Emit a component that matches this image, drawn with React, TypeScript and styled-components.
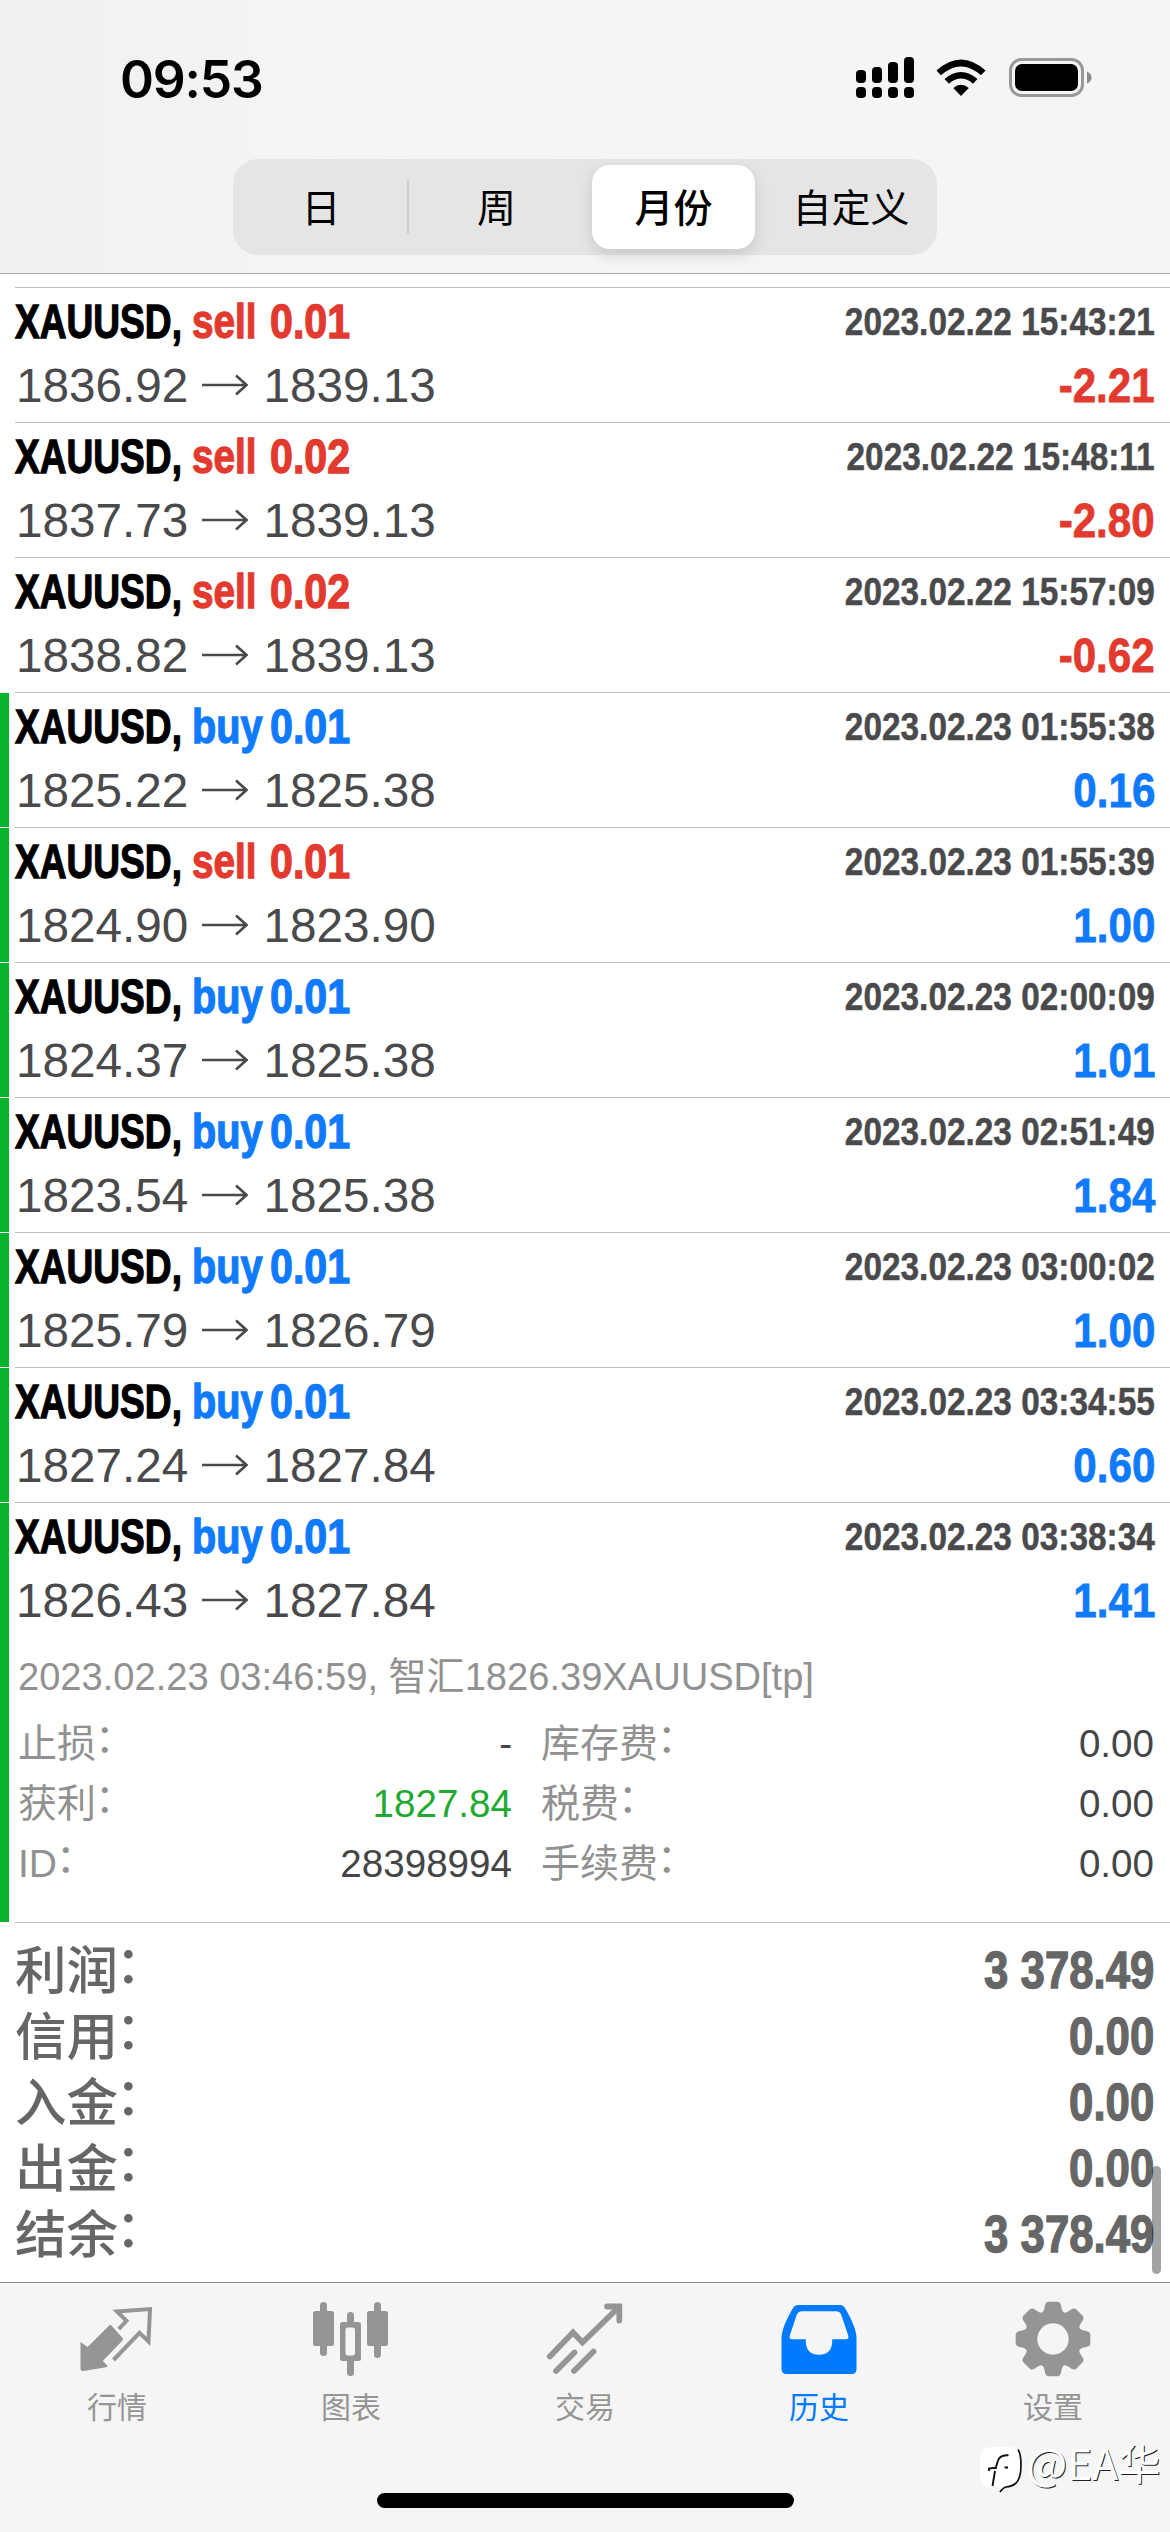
import React from "react";
import styled, { createGlobalStyle } from "styled-components";

const sans = `"Liberation Sans", "Noto Sans CJK SC", sans-serif`;
const RED = "#e23a2e";
const BLUE = "#0f7afc";
const GREEN = "#08b42c";

const GlobalStyle = createGlobalStyle`
  * { box-sizing: border-box; }
  body { margin: 0; background: #fff; }
`;

const Screen = styled.div`
  position: relative;
  display: flex;
  flex-direction: column;
  width: 1170px;
  height: 2532px;
  overflow: hidden;
  background: #fff;
  font-family: ${sans};
`;

const Header = styled.header`
  display: flex;
  flex-direction: column;
  height: 274px;
  flex: none;
  background: linear-gradient(90deg, #f0f0f0 0%, #f4f4f5 22%, #f5f5f5 50%, #f5f5f5 80%, #f3f4f6 100%);
  border-bottom: 1px solid #a9a9a9;
`;

const StatusBar = styled.div`
  display: flex;
  justify-content: space-between;
  align-items: center;
  height: 159px;
  padding: 0 78px 4px 120px;
`;

const Clock = styled.div`
  padding-top: 2px;
  font-family: Inter, sans-serif;
  font-size: 51.5px;
  font-weight: 600;
  line-height: 60px;
  letter-spacing: -1.2px;
  color: #000;
`;

const StatusIcons = styled.div`
  display: flex;
  align-items: center;
  gap: 22px;
`;

const Segmented = styled.div`
  display: grid;
  grid-template-columns: 176px 183px 163px 1fr;
  width: 704px;
  height: 96px;
  margin-left: 233px;
  padding: 6px 0;
  border-radius: 25px;
  background: #e5e5e6;
`;

const Segment = styled.div<{ $active?: boolean; $divider?: boolean; $pad?: string }>`
  position: relative;
  display: flex;
  align-items: center;
  justify-content: center;
  padding: ${(p) => p.$pad || "0 0 5px"};
  border-radius: 18px;
  color: #000;
  font-size: 39px;
  line-height: 60px;
  font-family: "Noto Sans CJK SC", sans-serif;
  font-weight: ${(p) => (p.$active ? 500 : 400)};
  background: ${(p) => (p.$active ? "#fff" : "transparent")};
  box-shadow: ${(p) => (p.$active ? "0 6px 16px rgba(0,0,0,0.13)" : "none")};
  &::after {
    content: "";
    display: ${(p) => (p.$divider ? "block" : "none")};
    position: absolute;
    right: 0;
    top: 15px;
    width: 2px;
    height: 54px;
    background: #cdcdcf;
  }
`;

const List = styled.main`
  display: flex;
  flex-direction: column;
  flex: none;
  height: 1648px;
  padding-top: 13px;
`;

const Deal = styled.article<{ $tp: boolean }>`
  position: relative;
  flex: none;
  padding-left: 15px;
  &::before {
    content: "";
    display: ${(p) => (p.$tp ? "block" : "none")};
    position: absolute;
    left: 0;
    top: 1px;
    bottom: 0;
    width: 9px;
    background: ${GREEN};
  }
`;

const DealBody = styled.div`
  height: 135px;
  padding: 5px 15px 0 0;
  border-top: 1px solid #bebebe;
`;

const Line = styled.div<{ $h: number }>`
  display: flex;
  justify-content: space-between;
  height: ${(p) => p.$h}px;
  line-height: ${(p) => p.$h}px;
`;

const Title = styled.div`
  display: flex;
  font-size: 49px;
  font-weight: 700;
`;

const Condensed = styled.span<{ $scale: number; $width?: number; $right?: boolean; $color?: string }>`
  display: block;
  width: ${(p) => (p.$width ? `${p.$width}px` : "auto")};
  white-space: nowrap;
  color: ${(p) => p.$color || "#000"};
  transform: scaleX(${(p) => p.$scale});
  transform-origin: ${(p) => (p.$right ? "right" : "left")} center;
  -webkit-text-stroke: 1.3px currentColor;
`;

const When = styled(Condensed)`
  font-size: 39.5px;
  font-weight: 700;
  -webkit-text-stroke-width: 0.5px;
`;

const Profit = styled(Condensed)`
  font-size: 49px;
  font-weight: 700;
  -webkit-text-stroke-width: 0.8px;
`;

const Prices = styled.div`
  display: flex;
  align-items: center;
  padding-left: 1px;
  font-size: 47.7px;
  color: #4a4a4c;
`;

const Arrow = styled.svg`
  width: 46px;
  height: 24px;
  margin: 0 15px 2px 14px;
`;

const Details = styled.div`
  height: 285px;
  padding: 10px 16px 0 3px;
  color: #919191;
  font-size: 38.1px;
`;

const Comment = styled.p`
  margin: 0;
  height: 67px;
  line-height: 60px;
  white-space: nowrap;
`;

const DetailGrid = styled.div`
  display: grid;
  grid-template-columns: 494px 1fr;
  column-gap: 29px;
`;

const DetailCell = styled.div`
  display: flex;
  justify-content: space-between;
  height: 60px;
  line-height: 60px;
`;

const DetailLabel = styled.span`
  font-size: 39px;
`;

const Colon = styled.span<{ $raise: number; $pull: number }>`
  margin-left: -${(p) => p.$pull}px;
  line-height: 0;
  vertical-align: ${(p) => p.$raise}px;
`;

const DetailValue = styled.span<{ $green?: boolean }>`
  font-size: 38.6px;
  color: ${(p) => (p.$green ? "#1eaa32" : "#454547")};
`;

const Summary = styled.section`
  flex: none;
  height: 360px;
  margin-left: 15px;
  padding: 14px 16px 0 0;
  border-top: 1px solid #bebebe;
`;

const SummaryRow = styled.div`
  display: flex;
  justify-content: space-between;
  height: 66px;
  line-height: 66px;
  color: #666;
`;

const SummaryLabel = styled.span`
  padding-top: 1px;
  font-size: 51.5px;
  font-weight: 500;
`;

const SummaryValue = styled(Condensed)`
  font-size: 51.5px;
  font-weight: 700;
`;

const ScrollThumb = styled.div`
  position: absolute;
  left: 1152px;
  top: 2166px;
  width: 9px;
  height: 108px;
  border-radius: 5px;
  background: rgba(0, 0, 0, 0.36);
`;

const TabBar = styled.nav`
  display: flex;
  flex-direction: column;
  align-items: center;
  flex: 1;
  background: #f5f5f5;
  border-top: 1px solid #868686;
`;

const Tabs = styled.div`
  display: grid;
  grid-template-columns: repeat(5, 234px);
  height: 210px;
`;

const Tab = styled.div<{ $active?: boolean }>`
  display: flex;
  flex-direction: column;
  align-items: center;
  padding-top: 14px;
  color: ${(p) => (p.$active ? "#007aff" : "#959595")};
`;

const TabIcon = styled.svg`
  width: 84px;
  height: 84px;
`;

const TabLabel = styled.span`
  margin-top: 2px;
  font-family: "Noto Sans CJK SC", sans-serif;
  font-size: 30px;
  line-height: 44px;
`;

const HomeIndicator = styled.div`
  width: 417px;
  height: 15px;
  border-radius: 8px;
  background: #000;
`;

const Watermark = styled.div`
  position: absolute;
  left: 978px;
  top: 2440px;
  display: flex;
  align-items: flex-start;
  color: #fff;
`;

const WatermarkText = styled.span`
  margin: -6px 0 0 3px;
  font-family: "Noto Sans CJK SC", sans-serif;
  font-size: 42.5px;
  line-height: 56px;
  white-space: nowrap;
  text-shadow: 1px 1px 0 #222;
`;

type DealData = { side: "buy" | "sell"; lots: string; open: string; close: string; time: string; profit: string; tp: boolean };

const deals: DealData[] = [
  { side: "sell", lots: "0.01", open: "1836.92", close: "1839.13", time: "2023.02.22 15:43:21", profit: "-2.21", tp: false },
  { side: "sell", lots: "0.02", open: "1837.73", close: "1839.13", time: "2023.02.22 15:48:11", profit: "-2.80", tp: false },
  { side: "sell", lots: "0.02", open: "1838.82", close: "1839.13", time: "2023.02.22 15:57:09", profit: "-0.62", tp: false },
  { side: "buy", lots: "0.01", open: "1825.22", close: "1825.38", time: "2023.02.23 01:55:38", profit: "0.16", tp: true },
  { side: "sell", lots: "0.01", open: "1824.90", close: "1823.90", time: "2023.02.23 01:55:39", profit: "1.00", tp: true },
  { side: "buy", lots: "0.01", open: "1824.37", close: "1825.38", time: "2023.02.23 02:00:09", profit: "1.01", tp: true },
  { side: "buy", lots: "0.01", open: "1823.54", close: "1825.38", time: "2023.02.23 02:51:49", profit: "1.84", tp: true },
  { side: "buy", lots: "0.01", open: "1825.79", close: "1826.79", time: "2023.02.23 03:00:02", profit: "1.00", tp: true },
  { side: "buy", lots: "0.01", open: "1827.24", close: "1827.84", time: "2023.02.23 03:34:55", profit: "0.60", tp: true },
  { side: "buy", lots: "0.01", open: "1826.43", close: "1827.84", time: "2023.02.23 03:38:34", profit: "1.41", tp: true },
];

const details = [
  { label: "止损", value: "-" },
  { label: "库存费", value: "0.00" },
  { label: "获利", value: "1827.84", green: true },
  { label: "税费", value: "0.00" },
  { label: "ID", value: "28398994" },
  { label: "手续费", value: "0.00" },
];

const totals = [
  ["利润", "3 378.49"],
  ["信用", "0.00"],
  ["入金", "0.00"],
  ["出金", "0.00"],
  ["结余", "3 378.49"],
];

const gearPath = (() => {
  const pts: string[] = [];
  const at = (r: number, deg: number) => {
    const a = (deg * Math.PI) / 180;
    return `${(42 + r * Math.cos(a)).toFixed(2)} ${(42 + r * Math.sin(a)).toFixed(2)}`;
  };
  for (let i = 0; i < 8; i++) {
    const c = i * 45 - 90;
    pts.push(
      `${i ? "L" : "M"}${at(30.5, c - 17)}`,
      `L${at(35, c - 13)}`,
      `Q${at(37.8, c - 11)} ${at(37.6, c - 7)}`,
      `L${at(37.6, c + 7)}`,
      `Q${at(37.8, c + 11)} ${at(35, c + 13)}`,
      `L${at(30.5, c + 17)}`,
      `Q${at(27, c + 22.5)} ${at(30.5, c + 28)}`,
    );
  }
  return pts.join(" ") + "Z M26.3 42a15.7 15.7 0 1 0 31.4 0a15.7 15.7 0 1 0-31.4 0Z";
})();

const icons: Record<string, React.ReactNode> = {
  quotes: (
    <>
      <path fill="currentColor" d="M5.5 45 12.6 50 34.4 28.2Q35.5 27.5 36.5 28.5L47.5 41Q48.3 42.3 47.5 43.5L27.8 64 32.3 68.5Q32.8 69.8 31.3 70.2L8 74Q5.5 74 5.5 71.5Z" />
      <path fill="none" stroke="currentColor" strokeWidth="4" d="M43.8 32 51.5 23.8 42 14.5 75 12.1 73.5 44.5 64.5 35.8 38.5 63" />
    </>
  ),
  chart: (
    <g fill="currentColor">
      <rect x="4" y="14" width="21" height="35" rx="2.5" />
      <rect x="11" y="5" width="7" height="54" rx="3.5" />
      <path fillRule="evenodd" d="M33.5 25h16a2.5 2.5 0 0 1 2.5 2.5v34a2.5 2.5 0 0 1-2.5 2.5h-16a2.5 2.5 0 0 1-2.5-2.5v-34a2.5 2.5 0 0 1 2.5-2.5ZM39 30.5a2.5 2.5 0 0 0-2.5 2.5v23a2.5 2.5 0 0 0 2.5 2.5h4.500a2.5 2.5 0 0 0 2.5-2.5v-23a2.5 2.5 0 0 0-2.5-2.5Z" />
      <path d="M38 26V18.500a3.5 3.5 0 0 1 7 0V26ZM38 63V75.500a3.5 3.5 0 0 0 7 0V63Z" />
      <rect x="58" y="14" width="21" height="35" rx="2.5" />
      <rect x="65" y="5" width="7" height="56" rx="3.5" />
    </g>
  ),
  trade: (
    <g fill="none" stroke="currentColor" strokeWidth="5.8" strokeLinecap="round" strokeLinejoin="miter">
      <path d="M6.8 59.5 30 35.5 39.5 45.5 76 10" />
      <path d="M64 9.5H76.3V23.5" />
      <path d="M13 74 31.5 55.5M31 74 50.5 54.5" />
    </g>
  ),
  history: (
    <path fill="currentColor" fillRule="evenodd" d="M21 8H63Q66.5 8 68.3 11.5Q79.5 31 79.5 41V72Q79.5 77 74.5 77H9.500Q4.5 77 4.5 72V41Q4.500 31 15.7 11.5Q17.5 8 21 8ZM24.5 14.200Q21.5 14.2 20 17L12.8 38.500Q11.8 42.2 15 42.2H28.800V45Q29.500 57.7 42 57.7Q54.500 57.7 55.2 45V42.2H69Q72.2 42.2 71.2 38.5L64 17Q62.5 14.2 59.5 14.2Z" />
  ),
  settings: <path fill="currentColor" fillRule="evenodd" d={gearPath} />,
};

const tabs = [
  { icon: "quotes", label: "行情" },
  { icon: "chart", label: "图表" },
  { icon: "trade", label: "交易" },
  { icon: "history", label: "历史", active: true },
  { icon: "settings", label: "设置" },
];

function DealRow({ deal, children }: { deal: DealData; children?: React.ReactNode }) {
  const sideColor = deal.side === "sell" ? RED : BLUE;
  return (
    <Deal $tp={deal.tp}>
      <DealBody>
        <Line $h={57}>
          <Title>
            <Condensed $scale={0.757} $width={177}>XAUUSD,</Condensed>
            <Condensed $scale={deal.side === "sell" ? 0.79 : 0.81} $width={78} $color={sideColor}>{deal.side}</Condensed>
            <Condensed $scale={0.84} $width={90} $color={sideColor}>{deal.lots}</Condensed>
          </Title>
          <When $scale={0.845} $right $color="#4a4a4c">{deal.time}</When>
        </Line>
        <Line $h={71}>
          <Prices>
            <span>{deal.open}</span>
            <Arrow viewBox="0 0 46 24">
              <path d="M0 12H44M34 2.5 44.5 12 34 21.5" fill="none" stroke="currentColor" strokeWidth="2.6" />
            </Arrow>
            <span>{deal.close}</span>
          </Prices>
          <Profit $scale={0.86} $right $color={deal.profit[0] === "-" ? RED : BLUE}>{deal.profit}</Profit>
        </Line>
      </DealBody>
      {children}
    </Deal>
  );
}

export default function App() {
  return (
    <Screen>
      <GlobalStyle />
      <Header>
        <StatusBar>
          <Clock>09:53</Clock>
          <StatusIcons>
            <svg width="58" height="42" viewBox="0 0 58 42">
              {[14, 11, 6, 1].map((top, i) => (
                <g key={top}>
                  <rect x={i * 16} y={top - 1} width="10" height={27 - top} rx="4" />
                  <rect x={i * 16} y="30" width="10" height="11" rx="4" />
                </g>
              ))}
            </svg>
            <svg width="50" height="38" viewBox="0 0 50 38">
              <path d="M0.5 11.5Q25-10.500 49.5 11.5L45 16.3Q25-1.500 5 16.3Z" />
              <path d="M8.5 20Q25 6 41.5 20L37 24.7Q25 14.5 13 24.7Z" />
              <path d="M17.2 29Q25 22.5 32.8 29L25 37Z" />
            </svg>
            <svg width="84" height="40" viewBox="0 0 84 40">
              <rect x="2.500" y="1.500" width="72" height="36" rx="11" fill="none" stroke="#98989a" strokeWidth="3" />
              <rect x="7" y="6" width="63" height="27" rx="7" />
              <path d="M79 13.5Q83.5 15.5 83.5 19.5T79 25.5Z" fill="#8a8a8c" />
            </svg>
          </StatusIcons>
        </StatusBar>
        <Segmented>
          <Segment $divider>日</Segment>
          <Segment $pad="0 8px 5px 0">周</Segment>
          <Segment $active>月份</Segment>
          <Segment $pad="0 0 5px 10px">自定义</Segment>
        </Segmented>
      </Header>
      <List>
        {deals.map((deal, i) => (
          <DealRow key={deal.time} deal={deal}>
            {i === deals.length - 1 && (
              <Details>
                <Comment>2023.02.23 03:46:59, 智汇1826.39XAUUSD[tp]</Comment>
                <DetailGrid>
                  {details.map((d) => (
                    <DetailCell key={d.label}>
                      <DetailLabel>
                        {d.label}
                        <Colon $raise={5} $pull={1}>：</Colon>
                      </DetailLabel>
                      <DetailValue $green={d.green}>{d.value}</DetailValue>
                    </DetailCell>
                  ))}
                </DetailGrid>
              </Details>
            )}
          </DealRow>
        ))}
      </List>
      <Summary>
        {totals.map(([label, value]) => (
          <SummaryRow key={label}>
            <SummaryLabel>
              {label}
              <Colon $raise={6} $pull={2.5}>：</Colon>
            </SummaryLabel>
            <SummaryValue $scale={0.85} $right $color="#666">{value}</SummaryValue>
          </SummaryRow>
        ))}
      </Summary>
      <TabBar>
        <Tabs>
          {tabs.map((t) => (
            <Tab key={t.label} $active={t.active}>
              <TabIcon viewBox="0 0 84 84">{icons[t.icon]}</TabIcon>
              <TabLabel>{t.label}</TabLabel>
            </Tab>
          ))}
        </Tabs>
        <HomeIndicator />
      </TabBar>
      <ScrollThumb />
      <Watermark>
        <svg width="46" height="54" viewBox="0 0 46 54">
          <path d="M14 7H31Q43 7 43 20V30Q43 46 30 47L24 50 22 47H14Q2 47 2 35V19Q2 7 14 7Z" fill="#fff" />
          <path d="M30.500 15.300Q21 14.500 19.500 22L17.500 29M11 31V28.500L19 27.500M17 31 14.500 46M26.500 27.500H30" fill="none" stroke="#111" strokeWidth="1.900" />
          <path d="M40 9.500Q43 14 43 25Q43 39 37.500 43.500Q34 46.500 28 47Q24.500 48 22 52" fill="none" stroke="#111" strokeWidth="1.700" />
        </svg>
        <WatermarkText>@EA华</WatermarkText>
      </Watermark>
    </Screen>
  );
}
